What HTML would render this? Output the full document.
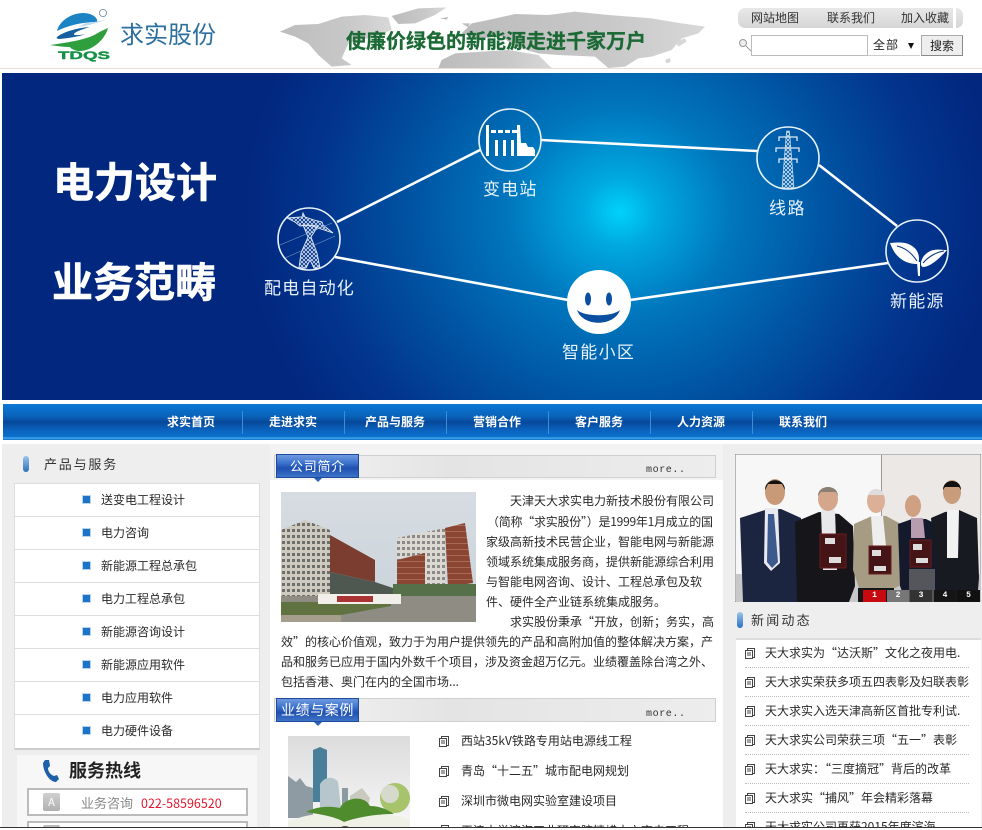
<!DOCTYPE html>
<html lang="zh">
<head>
<meta charset="utf-8">
<title>求实股份</title>
<style>
html,body{margin:0;padding:0;background:#fff}
#p{position:relative;width:982px;height:830px;overflow:hidden;background:#fff;font-family:"WenQuanYi Zen Hei","Noto Sans CJK SC","Liberation Sans",sans-serif;font-size:12px;color:#2a2a2a}
#p div,#p span.t{position:absolute;white-space:nowrap}
.t{line-height:16px;position:absolute;white-space:nowrap}
.n{font-family:"Noto Sans CJK SC",sans-serif}
svg{position:absolute;display:block}
.row{left:0;width:244px;height:32px;border-bottom:1px solid #ddd}
.tab{width:81px;height:22px;background:linear-gradient(#6f9ade 0,#3f74cf 35%,#1f50b0 60%,#3f74c8 100%);border:1px solid #1d4a9c;color:#fff;font-size:13px;line-height:22px;text-align:center;letter-spacing:.8px}
.more{font-family:"Liberation Mono",monospace;font-size:10px;color:#333;letter-spacing:.6px;line-height:12px}
.dot{left:745px;width:224px;border-top:1px dotted #bbb;height:0}
.pg{top:590px;height:12px;color:#fff;font:bold 8px/12px "Liberation Mono",monospace;text-align:center;background:#222}
.bu{width:7px;height:7px;background:#1c74c8;border:1px solid #b9d4ea;left:82px}
</style>
</head>
<body>
<div id="p">
<!-- header -->
<div style="left:0;top:68px;width:982px;height:1px;background:#e8ded4"></div>
<svg style="left:50px;top:8px" width="70" height="56" viewBox="0 0 70 56">
<circle cx="53" cy="5" r="3.6" fill="none" stroke="#6f8a9c" stroke-width=".8"/>
<path d="M7 23C10 10 28 2 40 6c6 2 8 6 7 8-16 0-30 4-40 9z" fill="#1c84c4"/>
<path d="M36 15c8-1 16-2 22-4-8 3-20 7-30 8z" fill="#bcdcec"/>
<path d="M7 29c6-5 20-9 32-10 2 0-14 4-15 7-1 2 8 1 12 0-8 3-18 4-26 5-3 0-4-1-3-2z" fill="#16609f"/>
<path d="M0 37c14-2 36-5 46-11 5-3 12-6 12-6-3 12-17 24-30 23-5-1-8-3-8-4-7 0-13-1-20-2z" fill="#2f9e3d"/>
<text x="8" y="51" font-family="Liberation Sans" font-weight="bold" font-size="11" textLength="52" lengthAdjust="spacingAndGlyphs" fill="#149245" stroke="#149245" stroke-width=".4">TDQS</text>
</svg>
<span class="t n" style="left:120px;top:20px;font-size:24px;line-height:26px;color:#2b6f9e">求实股份</span>
<svg style="left:275px;top:0" width="440" height="68" viewBox="0 0 1320 204">
<defs><linearGradient id="mp" x1="0" y1="0" x2="1" y2="0"><stop offset="0" stop-color="#bcbcbc"/><stop offset=".6" stop-color="#c8c8c8"/><stop offset="1" stop-color="#d8d8d8"/></linearGradient></defs>
<g fill="url(#mp)">
<path d="M15 95L60 75 130 72 200 50 270 45 340 52 350 90 300 110 220 130 200 175 230 195 170 200 130 165 100 130 60 110z"/>
<path d="M350 48L430 25 515 22 480 45 420 70 370 72z"/>
<path d="M640 60L720 42 820 45 900 35 1000 45 1130 55 1220 70 1290 80 1270 100 1220 115 1190 150 1130 170 1090 175 1050 200 1000 204 960 170 850 165 790 160 720 140 680 110 600 115 560 100 590 70z"/>
<path d="M500 180L540 160 700 150 790 165 830 204H490z"/>
<path d="M1200 125l30-10 5 10-25 15zM1170 180l14-6 3 12-12 4zM495 55l25-4-5 8zM560 70l25 0-5 12z"/>
</g>
</svg>
<span class="t n" style="left:346px;top:26px;font-size:20px;line-height:28px;font-weight:700;color:#1b6a35;-webkit-text-stroke:.3px #1b6a35">使廉价绿色的新能源走进千家万户</span>
<div style="left:738px;top:8px;width:225px;height:20px;border-radius:7px;background:linear-gradient(#e8e8e8,#d6d6d6)"></div>
<div style="left:953px;top:8px;width:3px;height:20px;background:#fff"></div>
<span class="t" style="left:751px;top:10px;color:#333">网站地图</span>
<span class="t" style="left:827px;top:10px;color:#333">联系我们</span>
<span class="t" style="left:901px;top:10px;color:#333">加入收藏</span>
<svg style="left:738px;top:38px" width="14" height="14"><circle cx="5" cy="5" r="3.5" fill="#eee" stroke="#999"/><path d="M8 8l5 5" stroke="#999"/></svg>
<div style="left:751px;top:35px;width:115px;height:19px;border:1px solid #bbb;background:#fff"></div>
<div style="left:868px;top:35px;width:52px;height:20px;border-bottom:1px solid #ccc;background:#fff"></div>
<span class="t" style="left:873px;top:37px;letter-spacing:1px;color:#222">全部</span>
<div style="left:908px;top:43px;width:0;height:0;border:3.500px solid transparent;border-top:6px solid #111;border-bottom:0"></div>
<div style="left:921px;top:35px;width:40px;height:19px;border:1px solid #aaa;border-right-color:#888;border-bottom-color:#888;background:#eee;text-align:center;line-height:19px;color:#222">搜索</div>

<!-- banner -->
<svg style="left:2px;top:73px" width="980" height="327" viewBox="2 73 980 327">
<defs>
<radialGradient id="g" gradientUnits="userSpaceOnUse" cx="0" cy="0" r="1" gradientTransform="translate(620 212) scale(375 345)">
<stop offset="0" stop-color="#00d2fb"/>
<stop offset=".1" stop-color="#00a8e0"/>
<stop offset=".3" stop-color="#0076bd"/>
<stop offset=".55" stop-color="#0054a3"/>
<stop offset=".8" stop-color="#02358e"/>
<stop offset="1" stop-color="#02277f"/>
</radialGradient>
<pattern id="lat" width="4" height="4" patternUnits="userSpaceOnUse"><path d="M0 0l4 4M4 0L0 4" stroke="#e6eef6" stroke-width=".7"/></pattern>
</defs>
<rect x="2" y="73" width="980" height="327" fill="url(#g)"/>
<g stroke="#fff" stroke-width="2.6" fill="none">
<path d="M337 222L480 150"/>
<path d="M335 257L568 300"/>
<path d="M541 140L757 151"/>
<path d="M819 165L897 226"/>
<path d="M630 300L888 263"/>
</g>
<g fill="none" stroke="#e8f2fa" stroke-width="1.6">
<circle cx="309" cy="239" r="31"/>
<circle cx="510" cy="140" r="31"/>
<circle cx="788" cy="158" r="31"/>
<circle cx="917" cy="251" r="31"/>
</g>
<circle cx="599" cy="302" r="32" fill="#fff"/>
<ellipse cx="588" cy="299" rx="3" ry="6.500" fill="#0a4fa0"/>
<ellipse cx="609" cy="299" rx="3" ry="6.500" fill="#0a4fa0"/>
<path d="M577 310c8 7 35 7 43 0-6 17-37 17-43 0z" fill="#0a4fa0"/>
<!-- substation -->
<g fill="#fff"><rect x="486" y="125" width="3" height="31"/>
<rect x="491" y="130" width="5" height="3"/><rect x="498" y="130" width="5" height="3"/><rect x="505" y="130" width="5" height="3"/><rect x="512" y="130" width="5" height="3"/>
<rect x="495" y="140" width="3" height="16"/><rect x="503" y="140" width="3" height="16"/><rect x="511" y="140" width="3" height="16"/>
<path d="M517 125h3l1 18h5l2 4h5l2 3v6h-18z"/></g>
<!-- pylon 1 -->
<g stroke="#e2ebf5" stroke-width=".9" fill="none">
<path d="M287 218l15-1 1-4 2 4 9 3 8 2 1 3 10 8-15-5-9-3-9 1-5-4z" fill="url(#lat)"/>
<path d="M303 225l5 12-7 16-2 15h7l4-8 4 8h6l-3-15-6-16 7-11z" fill="url(#lat)"/>
<path d="M280 245l52-22M285 258l50-22" stroke-width=".5" stroke="#8fb0d2"/>
</g>
<!-- pylon 2 -->
<path d="M786.500 131h3l4.500 57h-12z" fill="url(#lat)" stroke="#e6eef6" stroke-width=".6"/>
<g stroke="#e2ebf5" stroke-width="1.3" fill="none">
<path d="M779 141v-4h18v4M776 152v-4h23v4M779 163v-4h18v4"/>
</g>
<!-- leaves -->
<path d="M890 243c9-1 17-1 22 3 5 3 7 8 7 13 0 3-1 5-2 5-8 0-16-3-22-11-2-3-4-7-5-10z" fill="#fff"/>
<path d="M897 246c8 2 14 6 20 15" stroke="#04307f" stroke-width="1" fill="none"/>
<path d="M947 250c-6 0-14-2-20 3-4 3-6 7-6 11 0 2 1 3 3 3 7-1 15-8 23-17z" fill="#fff"/>
<path d="M944 251c-7 1-15 5-21 12" stroke="#04307f" stroke-width="1" fill="none"/>
<path d="M917 262h3v14h-2z" fill="#fff"/>
<g font-family="Noto Sans CJK SC,sans-serif" fill="#e8f3fb" font-size="17">
<text x="264" y="294" letter-spacing="1.2">配电自动化</text>
<text x="483" y="195" letter-spacing="1.2">变电站</text>
<text x="769" y="214" letter-spacing="1.5">线路</text>
<text x="890" y="307" letter-spacing="1.2">新能源</text>
<text x="562" y="358" letter-spacing="1.3">智能小区</text>
</g>
<g font-family="Noto Sans CJK SC,sans-serif" fill="#fff" stroke="#fff" stroke-width=".6" font-size="41" font-weight="700">
<text x="53" y="197">电力设计</text>
<text x="52" y="297">业务范畴</text>
</g>
</svg>

<!-- nav -->
<div style="left:0;top:400px;width:982px;height:43px;background:#fff"></div>
<div style="left:3px;top:404px;width:979px;height:36px;background:linear-gradient(#0b78d6 0,#0a62b8 35%,#06489a 50%,#0a62bd 72%,#0b72cf 92%,#4fb2ee 94%,#0a6cc8 100%)"></div>
<div style="left:242px;top:411px;width:1px;height:23px;background:#3a8ed6"></div>
<div style="left:344px;top:411px;width:1px;height:23px;background:#3a8ed6"></div>
<div style="left:446px;top:411px;width:1px;height:23px;background:#3a8ed6"></div>
<div style="left:548px;top:411px;width:1px;height:23px;background:#3a8ed6"></div>
<div style="left:650px;top:411px;width:1px;height:23px;background:#3a8ed6"></div>
<div style="left:752px;top:411px;width:1px;height:23px;background:#3a8ed6"></div>
<span class="t n" style="left:167px;top:414px;color:#fff;font-weight:700">求实首页</span>
<span class="t n" style="left:269px;top:414px;color:#fff;font-weight:700">走进求实</span>
<span class="t n" style="left:365px;top:414px;color:#fff;font-weight:700">产品与服务</span>
<span class="t n" style="left:473px;top:414px;color:#fff;font-weight:700">营销合作</span>
<span class="t n" style="left:575px;top:414px;color:#fff;font-weight:700">客户服务</span>
<span class="t n" style="left:677px;top:414px;color:#fff;font-weight:700">人力资源</span>
<span class="t n" style="left:779px;top:414px;color:#fff;font-weight:700">联系我们</span>

<!-- body bg -->
<div style="left:2px;top:444px;width:980px;height:386px;background:#eeeeee"></div>

<!-- left -->
<div style="left:23px;top:456px;width:6px;height:16px;border-radius:3px;background:linear-gradient(#9cc4ea,#2a70c0)"></div>
<span class="t" style="left:44px;top:456px;font-size:13px;letter-spacing:1.8px;color:#333">产品与服务</span>
<div style="left:14px;top:483px;width:244px;height:264px;background:#fff;border:1px solid #ddd;border-bottom:2px solid #ccc">
<div class="row" style="top:0"></div><div class="row" style="top:33px"></div><div class="row" style="top:66px"></div><div class="row" style="top:99px"></div><div class="row" style="top:132px"></div><div class="row" style="top:165px"></div><div class="row" style="top:198px"></div>
</div>
<div class="bu" style="top:495px"></div>
<div class="bu" style="top:528px"></div>
<div class="bu" style="top:561px"></div>
<div class="bu" style="top:594px"></div>
<div class="bu" style="top:627px"></div>
<div class="bu" style="top:660px"></div>
<div class="bu" style="top:693px"></div>
<div class="bu" style="top:726px"></div>
<span class="t" style="left:101px;top:492px">送变电工程设计</span>
<span class="t" style="left:101px;top:525px">电力咨询</span>
<span class="t" style="left:101px;top:558px">新能源工程总承包</span>
<span class="t" style="left:101px;top:591px">电力工程总承包</span>
<span class="t" style="left:101px;top:624px">新能源咨询设计</span>
<span class="t" style="left:101px;top:657px">新能源应用软件</span>
<span class="t" style="left:101px;top:690px">电力应用软件</span>
<span class="t" style="left:101px;top:723px">电力硬件设备</span>

<div style="left:17px;top:755px;width:240px;height:75px;background:#f7f7f7"></div>
<svg style="left:42px;top:759px" width="18" height="23" viewBox="0 0 18 23"><path d="M3 1l4 0 1 6-2 2c0 4 3 7 6 8l3-1 2 4-3 3C7 23 1 12 1 4z" fill="#1d5fa8"/></svg>
<span class="t n" style="left:69px;top:758px;font-size:18px;line-height:24px;font-weight:700;color:#222">服务热线</span>
<div style="left:27px;top:788px;width:217px;height:24px;border:2px solid #bbb;background:#fff"></div>
<div style="left:27px;top:821px;width:217px;height:20px;border:2px solid #bbb;background:#fff"></div>
<div style="left:43px;top:793px;width:17px;height:18px;border-radius:2px;background:linear-gradient(#d0d0d0,#b0b0b0);color:#fff;font-size:11px;line-height:18px;text-align:center">A</div>
<div style="left:43px;top:825px;width:17px;height:19px;border-radius:2px;background:#bbb"></div>
<span class="t" style="left:81px;top:795px;font-size:13px;color:#888">业务咨询</span>
<span class="t" style="left:141px;top:795px;font-size:12.500px;color:#e0182d">022-58596520</span>

<!-- center -->
<div style="left:270px;top:444px;width:453px;height:36px;background:#f3f3f3"></div>
<div style="left:270px;top:480px;width:453px;height:350px;background:#fff"></div>
<div style="left:274px;top:455px;width:440px;height:21px;background:linear-gradient(90deg,#f4f4f4,#e4e4e4 40%,#ededed);border:1px solid #d0d0d0"></div>
<div class="tab" style="left:276px;top:454px">公司简介</div>
<div style="left:314px;top:478px;width:0;height:0;border:4px solid transparent;border-top-color:#2a62b8;border-bottom:0"></div>
<span class="more" style="left:646px;top:465px;position:absolute">more..</span>

<svg style="left:281px;top:492px" width="195" height="130" viewBox="0 0 195 130">
<defs>
<linearGradient id="sk" x1="0" y1="0" x2="0" y2="1"><stop offset="0" stop-color="#d6dce2"/><stop offset="1" stop-color="#c9d3da"/></linearGradient>
<pattern id="w1" width="5" height="6" patternUnits="userSpaceOnUse"><rect width="5" height="6" fill="#cfcabf"/><rect x="1" y="1" width="3" height="3" fill="#6e6e6a"/></pattern>
<pattern id="w2" width="5" height="6" patternUnits="userSpaceOnUse"><rect width="5" height="6" fill="#dcd8d2"/><rect x="1" y="1" width="3" height="3" fill="#8c8a88"/></pattern>
<pattern id="w3" width="5" height="6" patternUnits="userSpaceOnUse"><rect width="5" height="6" fill="#8a4632"/><rect x="0" y="3" width="5" height="1" fill="#a86a52"/></pattern>
</defs>
<rect width="195" height="130" fill="url(#sk)"/>
<path d="M0 38L24 28 49 38V108L0 112z" fill="url(#w1)"/>
<path d="M49 43L94 68V90L49 80z" fill="#7a3d30"/>
<path d="M49 80L94 90 112 96V106H49z" fill="#4f5850"/>
<path d="M116 46L164 36V100H116z" fill="url(#w2)"/>
<path d="M116 68L144 61V92H116z" fill="url(#w3)"/>
<path d="M164 36L184 31 192 91 167 95z" fill="url(#w3)"/>
<rect x="112" y="92" width="83" height="14" fill="#56704a"/>
<rect x="0" y="104" width="195" height="26" fill="#8f8c84"/>
<path d="M0 110H37V108H110V114L60 123H0z" fill="#5f7240"/>
<rect x="37" y="102" width="83" height="10" fill="#f2eeea"/>
<rect x="56" y="104" width="36" height="6" fill="#a33"/>
<rect x="0" y="123" width="60" height="7" fill="#a59e8c"/>
</svg>
<span class="t" style="left:510px;top:493px">天津天大求实电力新技术股份有限公司</span>
<span class="t" style="left:487px;top:514px;letter-spacing:-.25px">（简称“求实股份”）是1999年1月成立的国</span>
<span class="t" style="left:486px;top:534px">家级高新技术民营企业，智能电网与新能源</span>
<span class="t" style="left:486px;top:554px">领域系统集成服务商，提供新能源综合利用</span>
<span class="t" style="left:486px;top:574px">与智能电网咨询、设计、工程总承包及软</span>
<span class="t" style="left:486px;top:594px">件、硬件全产业链系统集成服务。</span>
<span class="t" style="left:510px;top:614px">求实股份秉承“开放，创新；务实，高</span>
<span class="t" style="left:281px;top:634px">效”的核心价值观，致力于为用户提供领先的产品和高附加值的整体解决方案，产</span>
<span class="t" style="left:281px;top:654px">品和服务已应用于国内外数千个项目，涉及资金超万亿元。业绩覆盖除台湾之外、</span>
<span class="t" style="left:281px;top:674px">包括香港、奥门在内的全国市场...</span>

<div style="left:274px;top:698px;width:440px;height:22px;background:linear-gradient(90deg,#f4f4f4,#e4e4e4 40%,#ededed);border:1px solid #d0d0d0"></div>
<div class="tab" style="left:276px;top:698px;font-size:14px;letter-spacing:.6px">业绩与案例</div>
<div style="left:314px;top:722px;width:0;height:0;border:4px solid transparent;border-top-color:#2a62b8;border-bottom:0"></div>
<span class="more" style="left:646px;top:709px;position:absolute">more..</span>

<svg style="left:288px;top:736px" width="122" height="94" viewBox="0 0 122 94">
<defs><linearGradient id="s2" x1="0" y1="0" x2="0" y2="1"><stop offset="0" stop-color="#dcdcdc"/><stop offset="1" stop-color="#f8f8f8"/></linearGradient></defs>
<rect width="122" height="94" fill="url(#s2)"/>
<path d="M25 14l7-3 7 3v52H25z" fill="#4a7f9c"/>
<path d="M0 40l8 6 4-4 6 8 7 2v30H0z" fill="#8f9ba2"/>
<path d="M32 48c5-8 14-8 18-2l4 34H32z" fill="#b7c6cc"/>
<path d="M54 52h6v26h-6z" fill="#8a9aa0"/>
<path d="M62 60l12-8 8 10-4 16H62z" fill="#c9c9c0"/>
<circle cx="107" cy="62" r="15" fill="#a7c46c"/><circle cx="102" cy="58" r="9" fill="#d6dacd"/>
<path d="M0 86c18-8 34-10 56-6 16-4 40-6 66 4v10H0z" fill="#f0f1e6"/>
<path d="M18 76c12-6 24-6 34-4 4-10 24-14 30-2 10 0 18 4 24 8-14 0-34 2-50 8-10-6-26-8-38-10z" fill="#4f8c2e"/>
<path d="M50 94c2-5 12-5 14 0z" fill="#3a1f10"/>
</svg>
<svg width="0" height="0" style="position:absolute"><defs><g id="ic"><rect x="2.500" y=".5" width="7" height="9" fill="#fff" stroke="#444"/><rect x=".5" y="2.500" width="7" height="8" fill="#fff" stroke="#444"/><path d="M2 5h4M2 7h4" stroke="#444"/></g></defs></svg>
<svg style="left:439px;top:736px" width="11" height="11"><use href="#ic"/></svg>
<svg style="left:439px;top:766px" width="11" height="11"><use href="#ic"/></svg>
<svg style="left:439px;top:796px" width="11" height="11"><use href="#ic"/></svg>
<svg style="left:439px;top:825px" width="11" height="11"><use href="#ic"/></svg>
<span class="t" style="left:461px;top:733px">西站35kV铁路专用站电源线工程</span>
<span class="t" style="left:461px;top:763px">青岛“十二五”城市配电网规划</span>
<span class="t" style="left:461px;top:793px">深圳市微电网实验室建设项目</span>
<span class="t" style="left:461px;top:823px">天津大学滨海工业研究院精蜡十六商电工程</span>

<!-- right -->
<svg style="left:735px;top:454px" width="246" height="148" viewBox="0 0 246 148">
<rect width="246" height="148" fill="#f7f7f7" stroke="#777"/>
<rect x="147" y="1" width="98" height="146" fill="#ece8e6"/>
<rect x="146" y="1" width="1" height="70" fill="#999"/>
<rect x="1" y="120" width="245" height="28" fill="#c8c8c8"/>
<path d="M5 64l25-8 16-1 20 9 2 84H8z" fill="#1c2540"/>
<path d="M30 54h13l2 55-9 8-7-8z" fill="#e9e9ef"/><path d="M33 60h6l4 48-6 6-5-6z" fill="#3d5a8e"/>
<ellipse cx="40" cy="38" rx="10" ry="13" fill="#c99a78"/><path d="M30 36c0-13 20-13 20 0l-3-6H33z" fill="#111"/>
<path d="M60 68l24-10 20 2 14 12 2 60-6 16H62z" fill="#15151a"/>
<path d="M86 56h14l2 60H88z" fill="#e8e8ea"/>
<ellipse cx="93" cy="45" rx="10" ry="12" fill="#d4a78c"/><path d="M83 42c0-12 20-12 20 0l-2-4H86z" fill="#8a7f72"/>
<path d="M119 70l18-8 14 0 15 8 2 60-8 4h-36l-6-18z" fill="#a69c84"/>
<rect x="123" y="134" width="36" height="14" fill="#17171a"/>
<path d="M136 62h12l3 30h-13z" fill="#eee"/>
<ellipse cx="141" cy="47" rx="9" ry="12" fill="#dbb097"/><path d="M133 41c2-8 14-8 16 0z" fill="#ddd"/>
<path d="M163 70l14-5 14 0 12 6 6 60-8 17h-30l-6-16z" fill="#141a2c"/>
<path d="M176 64h12l2 20h-14z" fill="#b89cb0"/>
<rect x="174" y="115" width="26" height="33" fill="#55555c"/>
<ellipse cx="178" cy="52" rx="8" ry="11" fill="#cfa081"/>
<path d="M196 64l14-6 14-2 18 8 2 60-2 24h-38z" fill="#181a22"/>
<path d="M212 56h12l-1 48h-11z" fill="#f2f2f2"/>
<ellipse cx="217" cy="38" rx="9" ry="12" fill="#c99d7c"/><path d="M208 36c0-12 18-12 18 0l-2-3h-14z" fill="#111"/>
<g fill="#451416" stroke="#6a1c1c"><rect x="85" y="80" width="26" height="34"/><rect x="134" y="92" width="22" height="28"/><rect x="175" y="86" width="21" height="27"/></g>
<g fill="#ddd"><rect x="90" y="84" width="10" height="6"/><rect x="94" y="103" width="12" height="6"/><rect x="137" y="96" width="9" height="6"/><rect x="139" y="112" width="12" height="5"/><rect x="178" y="90" width="9" height="6"/><rect x="181" y="104" width="12" height="5"/></g>
</svg>
<div class="pg" style="left:863px;width:23px;background:#c8090f">1</div>
<div class="pg" style="left:887px;width:22px;background:#777">2</div>
<div class="pg" style="left:910px;width:22px;background:#333">3</div>
<div class="pg" style="left:934px;width:22px;background:#151515">4</div>
<div class="pg" style="left:957px;width:23px;background:#111">5</div>

<div style="left:737px;top:612px;width:6px;height:16px;border-radius:3px;background:linear-gradient(#9cc4ea,#2a70c0)"></div>
<span class="t" style="left:751px;top:612px;font-size:13px;letter-spacing:2.200px;color:#333">新闻动态</span>
<div style="left:736px;top:638px;width:245px;height:192px;background:#fff;border-top:2px solid #ddd"></div>
<svg style="left:745px;top:648px" width="11" height="11"><use href="#ic"/></svg>
<svg style="left:745px;top:677px" width="11" height="11"><use href="#ic"/></svg>
<svg style="left:745px;top:706px" width="11" height="11"><use href="#ic"/></svg>
<svg style="left:745px;top:735px" width="11" height="11"><use href="#ic"/></svg>
<svg style="left:745px;top:764px" width="11" height="11"><use href="#ic"/></svg>
<svg style="left:745px;top:793px" width="11" height="11"><use href="#ic"/></svg>
<svg style="left:745px;top:822px" width="11" height="11"><use href="#ic"/></svg>
<span class="t" style="left:765px;top:645px">天大求实为“达沃斯”文化之夜用电.</span>
<span class="t" style="left:765px;top:674px">天大求实荣获多项五四表彰及妇联表彰</span>
<span class="t" style="left:765px;top:703px">天大求实入选天津高新区首批专利试.</span>
<span class="t" style="left:765px;top:732px">天大求实公司荣获三项“五一”表彰</span>
<span class="t" style="left:765px;top:761px">天大求实：“三度摘冠”背后的改革</span>
<span class="t" style="left:765px;top:790px">天大求实“捕风”年会精彩落幕</span>
<span class="t" style="left:765px;top:819px">天大求实公司再获2015年度滨海</span>
<div class="dot" style="top:667px"></div><div class="dot" style="top:696px"></div><div class="dot" style="top:725px"></div><div class="dot" style="top:754px"></div><div class="dot" style="top:783px"></div><div class="dot" style="top:812px"></div>

<div style="left:0;top:827px;width:982px;height:1px;background:#333"></div>
<div style="left:0;top:828px;width:982px;height:2px;background:#fff"></div>
</div>
</body>
</html>
